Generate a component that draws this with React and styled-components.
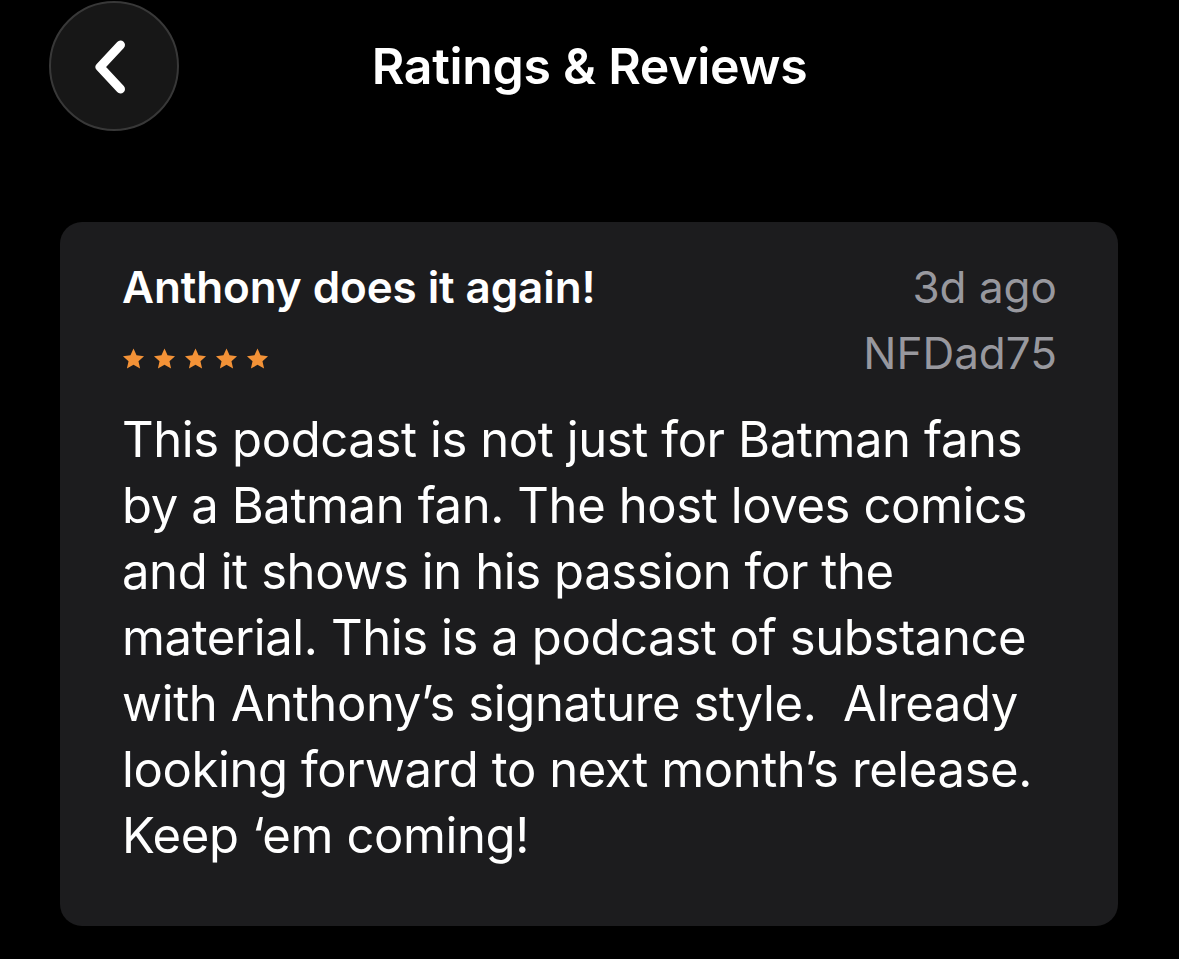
import React from "react";
import styled, { createGlobalStyle } from "styled-components";

const Global = createGlobalStyle`
  html, body {
    margin: 0;
    padding: 0;
    background: #000;
  }
  body {
    font-family: Inter, "Liberation Sans", sans-serif;
    color: #fff;
    -webkit-font-smoothing: antialiased;
  }
`;

// review text, broken the way the app shows it
const review = {
  title: "Anthony does it again!",
  when: "3d ago",
  author: "NFDad75",
  stars: 5,
  lines: [
    "This podcast is not just for Batman fans",
    "by a Batman fan. The host loves comics",
    "and it shows in his passion for the",
    "material. This is a podcast of substance",
    "with Anthony\u2019s signature style.\u00a0 Already",
    "looking forward to next month\u2019s release.",
    "Keep \u2018em coming!",
  ],
};

const Star = () => (
  <svg width="23" height="22" viewBox="0 0 24 23">
    <path
      d="M12 0.6l3.2 7.1 7.8 0.8-5.8 5.3 1.7 7.7L12 17.6l-6.9 3.9 1.7-7.7L1 8.5l7.8-0.8z"
      fill="#f39237"
    />
  </svg>
);

const App = () => {
  return (
    <Page>
      <Global />
      <Header>
        <HeaderSide>
          <BackButton aria-label="Back">
            <svg width="130" height="130" viewBox="0 0 130 130">
              <path
                d="M71.5 44L51 66l20.5 22"
                fill="none"
                stroke="#fff"
                strokeWidth="9"
                strokeLinecap="round"
                strokeLinejoin="round"
              />
            </svg>
          </BackButton>
        </HeaderSide>
        <Title>Ratings &amp; Reviews</Title>
        <HeaderSide />
      </Header>
      <Card>
        <CardTop>
          <Left>
            <ReviewTitle>{review.title}</ReviewTitle>
            <Stars>
              {Array.from({ length: review.stars }).map((_, i) => (
                <Star key={i} />
              ))}
            </Stars>
          </Left>
          <Right>
            <Meta>{review.when}</Meta>
            <Meta>{review.author}</Meta>
          </Right>
        </CardTop>
        <Body>
          {review.lines.map((l, i) => (
            <Line key={i}>{l}</Line>
          ))}
        </Body>
      </Card>
    </Page>
  );
};

export default App;

const Page = styled.div`
  width: 1179px;
  height: 959px;
  background: #000;
  overflow: hidden;
  padding-top: 1px;
  box-sizing: border-box;
`;

const Header = styled.div`
  display: grid;
  grid-template-columns: 1fr auto 1fr;
  align-items: center;
  height: 130px;
`;

const HeaderSide = styled.div`
  display: flex;
  padding-left: 49px;
`;

const BackButton = styled.button`
  width: 130px;
  height: 130px;
  border-radius: 50%;
  background: #171717;
  border: 2px solid #383838;
  box-sizing: border-box;
  padding: 0;
  display: flex;
  align-items: center;
  justify-content: center;
  cursor: pointer;
  svg {
    flex-shrink: 0;
  }
`;

const Title = styled.h1`
  margin: 0;
  font-size: 50px;
  font-weight: 600;
  line-height: 60px;
  letter-spacing: -0.3px;
`;

const Card = styled.div`
  margin: 91px 61px 0 60px;
  background: #1c1c1e;
  border-radius: 22px;
  padding: 39px 61px 57px 62px;
`;

const CardTop = styled.div`
  display: flex;
  justify-content: space-between;
  align-items: flex-start;
`;

const Left = styled.div`
  display: flex;
  flex-direction: column;
`;

const ReviewTitle = styled.div`
  font-size: 44px;
  font-weight: 600;
  line-height: 52px;
  letter-spacing: -0.1px;
`;

const Stars = styled.div`
  display: flex;
  gap: 8px;
  margin-top: 35px;
`;

const Right = styled.div`
  display: flex;
  flex-direction: column;
  align-items: flex-end;
  gap: 14px;
`;

const Meta = styled.div`
  color: #98989e;
  font-size: 44px;
  line-height: 52px;
`;

const Body = styled.div`
  margin-top: 28px;
  font-size: 49px;
  line-height: 66px;
  letter-spacing: -0.4px;
`;

const Line = styled.div`
  white-space: nowrap;
`;
